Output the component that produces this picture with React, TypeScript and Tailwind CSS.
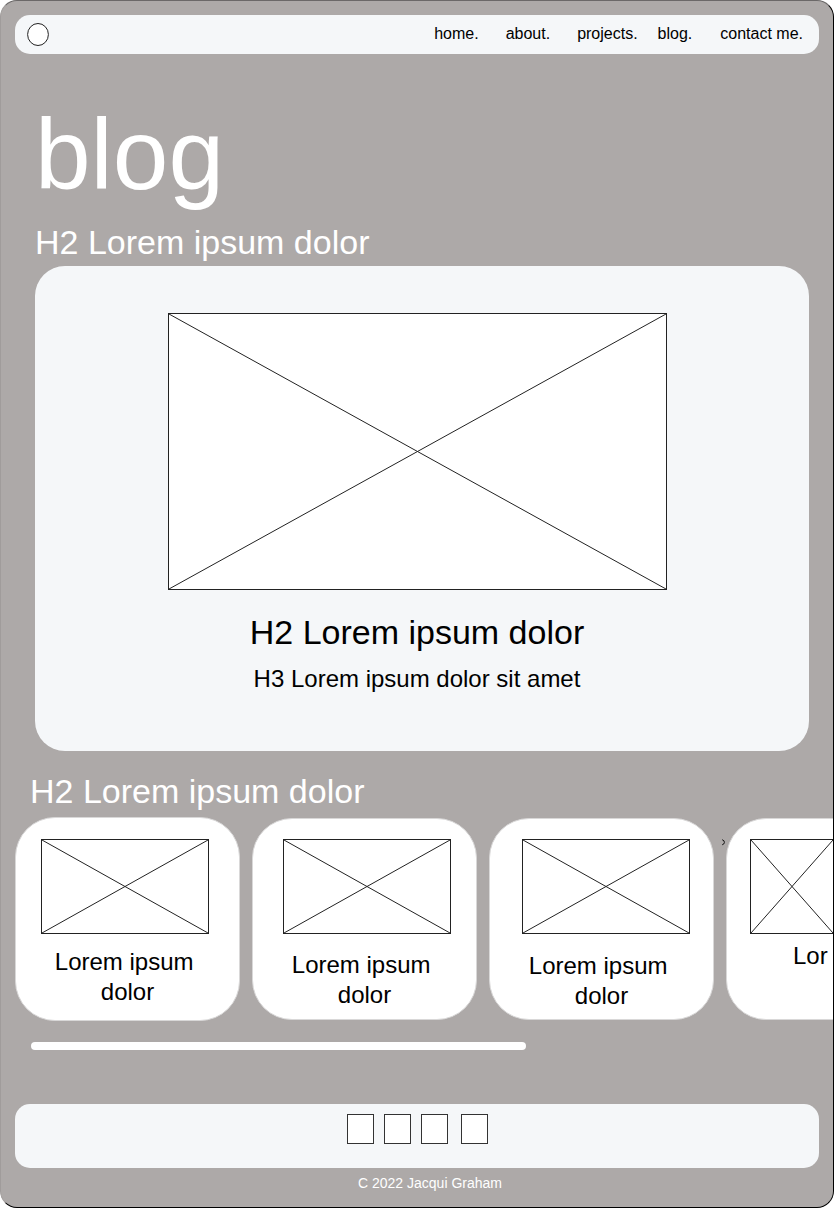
import React from "react";

function Placeholder({ className }: { className: string }) {
  return (
    <div className={`border border-[#222] bg-white ${className}`}>
      <svg
        className="block h-full w-full"
        viewBox="0 0 100 100"
        preserveAspectRatio="none"
        fill="none"
        stroke="#222"
        strokeWidth="1"
        aria-hidden="true"
      >
        <path d="M0 0 100 100M100 0 0 100" vectorEffect="non-scaling-stroke" />
      </svg>
    </div>
  );
}

const navLinks = [
  { label: "home.", href: "#home", gap: "" },
  { label: "about.", href: "#about", gap: "ml-[27px]" },
  { label: "projects.", href: "#projects", gap: "ml-[27px]" },
  { label: "blog.", href: "#blog", gap: "ml-5" },
  { label: "contact me.", href: "#contact", gap: "ml-7" },
];

const posts = [
  { card: "h-[204px] pt-[21px]", image: "ml-[25px]", text: "mt-[13px]" },
  { card: "mt-px h-[202px] pt-5", image: "ml-[30px]", text: "mt-4" },
  { card: "mt-px h-[202px] pt-5", image: "ml-8", text: "mt-[17px]" },
];

const socials = [
  { name: "first", gap: "" },
  { name: "second", gap: "ml-[10px]" },
  { name: "third", gap: "ml-[10px]" },
  { name: "fourth", gap: "ml-[13px]" },
];

export default function App() {
  return (
    <div className="overflow-hidden rounded-[17px] border border-t-[#6b6868] border-r-black border-b-black border-l-[#a09c9b] bg-[#ada9a8] font-['Liberation_Sans',Arial,sans-serif] text-black">
      <header className="mx-[14px] mt-[14px] flex items-center justify-between rounded-[15px] bg-[#f5f7f9] pr-4 pl-3">
        <a href="#home" aria-label="Home" className="block">
          <svg className="block h-[24px] w-[22px]" viewBox="0 0 22 24" aria-hidden="true">
            <ellipse cx="11" cy="11.5" rx="10.4" ry="11" fill="#fff" stroke="#222" strokeWidth="1" />
          </svg>
        </a>
        <nav className="flex pt-[7px] pb-2 text-base leading-6">
          {navLinks.map((link) => (
            <a key={link.label} href={link.href} className={link.gap}>
              {link.label}
            </a>
          ))}
        </nav>
      </header>

      <main>
        <h1 className="mt-[50px] ml-[34px] text-[100px] leading-[100px] text-white">blog</h1>

        <section className="mt-[18px] mr-6 ml-[34px]">
          <h2 className="text-[34px] leading-10 text-white">H2 Lorem ipsum dolor</h2>
          <article className="mt-1 flex flex-col items-center rounded-[30px] bg-[#f5f7f9] pt-[47px] pr-[10px] pb-[57px] text-center">
            <Placeholder className="h-[277px] w-[499px] max-w-full" />
            <h2 className="mt-[22px] text-[34px] leading-10">H2 Lorem ipsum dolor</h2>
            <h3 className="mt-3 text-2xl leading-[30px]">H3 Lorem ipsum dolor sit amet</h3>
          </article>
        </section>

        <section className="mt-5">
          <h2 className="ml-[29px] text-[34px] leading-10 text-white">H2 Lorem ipsum dolor</h2>
          <div className="relative mt-1.5 ml-[14px] flex items-start gap-3 overflow-hidden">
            {posts.map((post, index) => (
              <article
                key={index}
                className={`w-[225px] shrink-0 rounded-[40px] border border-[#d9d8d8] bg-white ${post.card}`}
              >
                <Placeholder className={`h-[95px] w-[168px] ${post.image}`} />
                <h3 className={`text-center text-2xl leading-[30px] ${post.text}`}>
                  Lorem ipsum&nbsp;
                  <br />
                  dolor
                </h3>
              </article>
            ))}
            <article className="mt-px h-[202px] w-[225px] shrink-0 rounded-[40px] border border-[#d9d8d8] bg-white pt-5 pl-[23px]">
              <Placeholder className="h-[95px] w-[84px]" />
              <h3 className="mt-[7px] ml-[43px] text-2xl leading-[30px]">Lor</h3>
            </article>
            <button type="button" aria-label="Next posts" className="absolute top-[22px] left-[706px]">
              <svg className="block h-[7px] w-[5px]" viewBox="0 0 5 7" fill="none" stroke="#111" aria-hidden="true">
                <path d="M1.2 .7 Q3.6 1.5 3.4 3.4 Q3.2 5.4 1.2 5.8" />
              </svg>
            </button>
          </div>
          <div className="mt-[21px] ml-[30px] h-2 w-[495px] max-w-full rounded-full bg-white" />
        </section>
      </main>

      <footer className="mt-[54px] px-[14px] pb-[14px]">
        <div className="flex justify-center rounded-[15px] bg-[#f5f7f9] pt-[10px] pb-6">
          {socials.map((social) => (
            <a
              key={social.name}
              href="#social"
              aria-label={`Social profile, ${social.name}`}
              className={`block h-[30px] w-[27px] border border-[#333] bg-white ${social.gap}`}
            />
          ))}
        </div>
        <p className="mt-[5px] pl-[26px] text-center text-sm leading-5 text-white">C 2022 Jacqui Graham</p>
      </footer>
    </div>
  );
}
